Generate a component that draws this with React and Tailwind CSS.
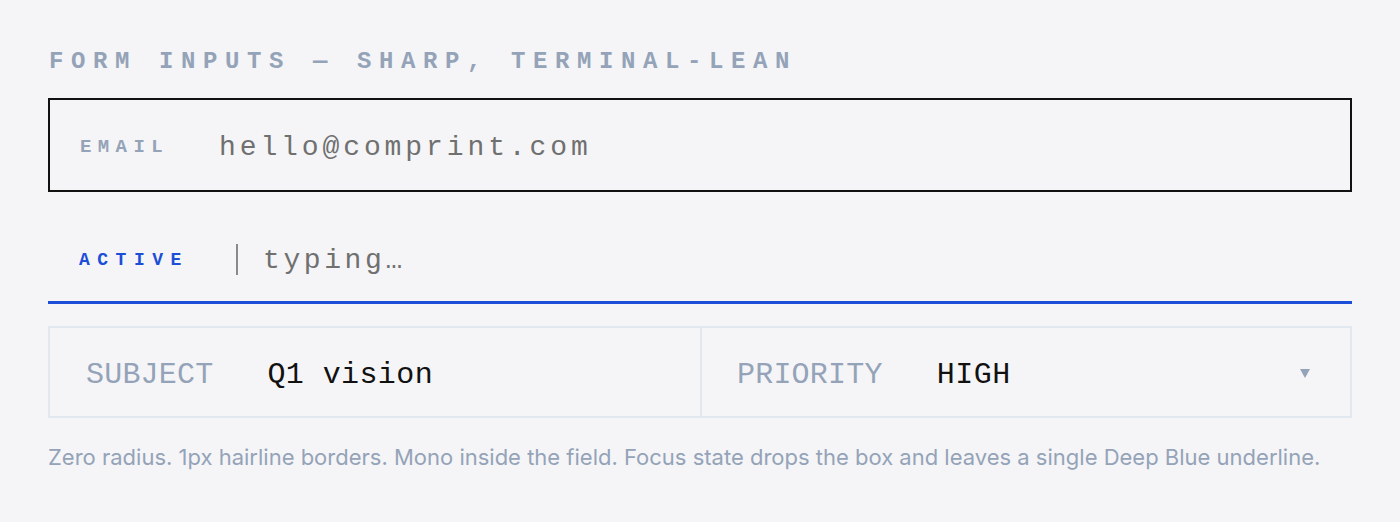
export default function App() {
  return (
    <div className="min-h-screen w-full bg-[#f5f5f7] px-[48px] pt-[50px]">
      <div className="pl-[1px] font-['Liberation_Mono','DejaVu_Sans_Mono',monospace] text-[24px] leading-[24px] font-bold tracking-[7.6px] text-[#94a3b8]">
        FORM INPUTS — SHARP, TERMINAL-LEAN
      </div>

      <div className="mt-[24px] flex h-[94px] items-center border-2 border-[#111111] pl-[30px] pt-[5px]">
        <div className="w-[140px] font-['Liberation_Mono','DejaVu_Sans_Mono',monospace] text-[19px] font-bold tracking-[6.4px] text-[#94a3b8]">
          EMAIL
        </div>
        <div className="ml-[-1px] font-['Liberation_Mono','DejaVu_Sans_Mono',monospace] text-[28px] tracking-[3.9px] text-[#707070]">
          hello@comprint.com
        </div>
      </div>

      <div className="mt-[22px] flex h-[90px] items-center border-b-[3px] border-[#1d4ed8] pl-[31px] pt-[6px]">
        <div className="w-[140px] font-['Liberation_Mono','DejaVu_Sans_Mono',monospace] text-[18px] font-bold tracking-[7.5px] text-[#1d4ed8]">
          ACTIVE
        </div>
        <div className="ml-[17px] mt-[-3px] h-[31px] w-[2px] bg-[#8a8a8a]" />
        <div className="ml-[25px] font-['Liberation_Mono','DejaVu_Sans_Mono',monospace] text-[28px] tracking-[3.6px] text-[#707070]">
          typing…
        </div>
      </div>

      <div className="mt-[22px] grid h-[92px] grid-cols-[652px_1fr] border-2 border-[#e2e8f0]">
        <div className="flex items-center border-r-2 border-[#e2e8f0] pl-[36px] pt-[7px]">
          <span className="font-['Liberation_Mono','DejaVu_Sans_Mono',monospace] text-[30px] tracking-[0.2px] text-[#94a3b8]">
            SUBJECT
          </span>
          <span className="ml-[54px] font-['Liberation_Mono','DejaVu_Sans_Mono',monospace] text-[30px] tracking-[0.4px] text-[#111111]">
            Q1 vision
          </span>
        </div>
        <div className="flex items-center pl-[35px] pr-[40px] pt-[7px]">
          <span className="font-['Liberation_Mono','DejaVu_Sans_Mono',monospace] text-[30px] tracking-[0.2px] text-[#94a3b8]">
            PRIORITY
          </span>
          <span className="ml-[54px] font-['Liberation_Mono','DejaVu_Sans_Mono',monospace] text-[30px] tracking-[0.5px] text-[#111111]">
            HIGH
          </span>
          <span className="ml-auto mt-[-4px] flex items-center">
            <svg width="10" height="9" viewBox="0 0 10 9">
              <polygon points="0,0 10,0 5,9" fill="#94a3b8" />
            </svg>
          </span>
        </div>
      </div>

      <p className="mt-[24px] font-['Inter','Noto_Sans',sans-serif] text-[22px] leading-[30px] text-[#94a3b8]">
        Zero radius. 1px hairline borders. Mono inside the field. Focus state drops the box and leaves a single Deep Blue underline.
      </p>
    </div>
  );
}
